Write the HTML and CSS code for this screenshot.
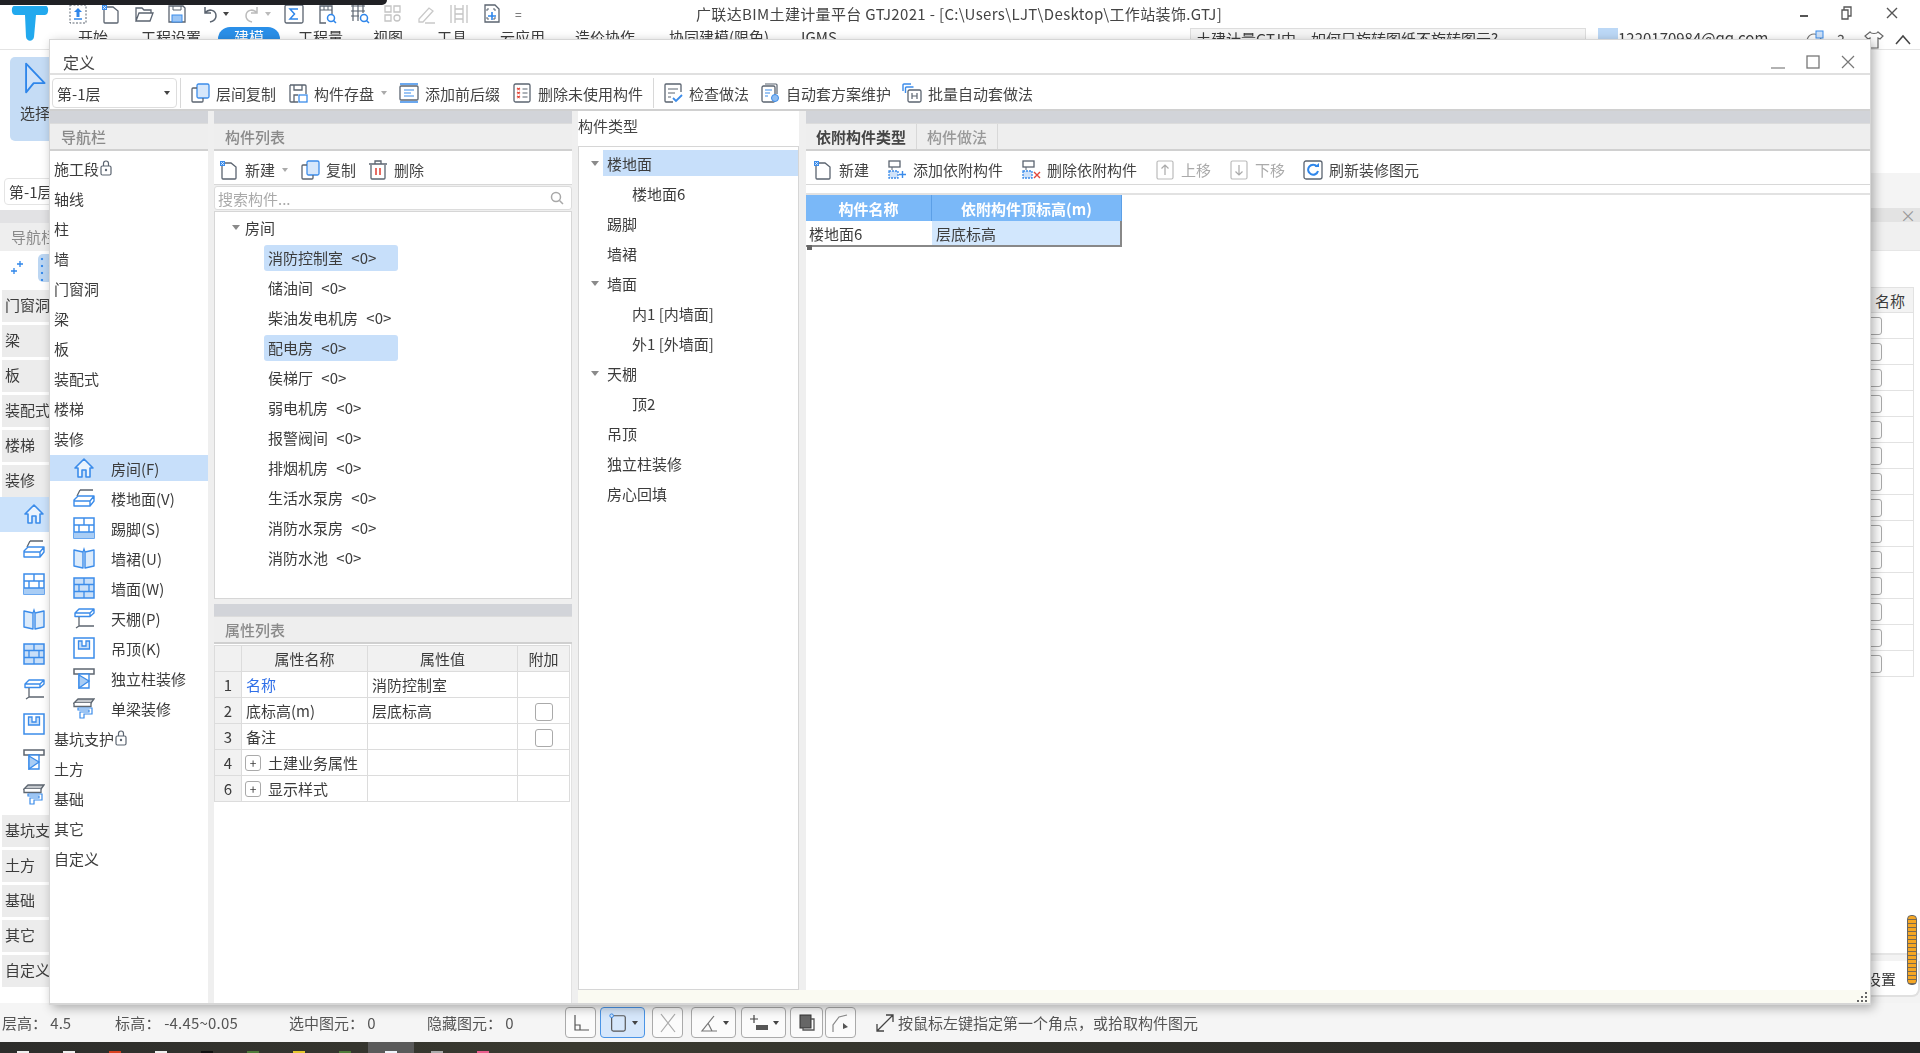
FILE: index.html
```html
<!DOCTYPE html>
<html lang="zh-CN">
<head>
  <meta charset="UTF-8">
  <title>广联达BIM土建计量平台 GTJ2021</title>
  <meta name="viewport" content="width=device-width, initial-scale=1">
  <link rel="stylesheet" href="styles.css">
</head>
<body>
<svg class="defs" aria-hidden="true">
  <defs>
    <symbol id="i-home" viewBox="0 0 22 22"><path d="M11 2 2 11h3v9h4v-7h4v7h4v-9h3z" fill="#eaf3fd" stroke="#3b8cea" stroke-width="1.6" stroke-linejoin="round"/></symbol>
    <symbol id="i-floor" viewBox="0 0 22 22"><path d="M7 3h13M7 3 4 9" fill="none" stroke="#5d6670" stroke-width="1.3"/><path d="M1 13l4-4h16v5l-4 5H1zM1 14h16l4-5M17 14v5" fill="#fff" stroke="#3b8cea" stroke-width="1.4" stroke-linejoin="round"/></symbol>
    <symbol id="i-skirt" viewBox="0 0 22 22"><rect x="1" y="1" width="20" height="20" fill="#fff" stroke="#3b8cea" stroke-width="1.5"/><path d="M1 15h20v6H1z" fill="#a9cdf5"/><path d="M1 8h20M1 15h20M11 1v7M6 8v7M16 8v7" fill="none" stroke="#3b8cea" stroke-width="1.4"/></symbol>
    <symbol id="i-dado" viewBox="0 0 22 22"><path d="M1 3l9 2v16l-9-2zM21 3l-9 2v16l9-2z" fill="#dcebfb" stroke="#3b8cea" stroke-width="1.4" stroke-linejoin="round"/><path d="M10 5l1-3 1 3" fill="none" stroke="#3b8cea" stroke-width="1.2"/></symbol>
    <symbol id="i-wall" viewBox="0 0 22 22"><rect x="1" y="1" width="20" height="20" fill="#c9dff8" stroke="#3b8cea" stroke-width="1.5"/><path d="M1 7.5h20M1 14.5h20M11 1v6.500M6 7.500v7M16 7.500v7M11 14.500V21" fill="none" stroke="#3b8cea" stroke-width="1.3"/></symbol>
    <symbol id="i-ceil" viewBox="0 0 22 22"><path d="M2 6l4-4h15v4l-4 3.500H2zM2 6h15l4-4M17 6v3.500" fill="#fff" stroke="#3b8cea" stroke-width="1.4" stroke-linejoin="round"/><path d="M6 10v9h15M6 19l-3 2" fill="none" stroke="#5d6670" stroke-width="1.3"/></symbol>
    <symbol id="i-hang" viewBox="0 0 22 22"><rect x="1" y="1" width="20" height="20" fill="#fff" stroke="#3b8cea" stroke-width="1.5"/><path d="M5.500 4v8h11V4h-3.500v5H9V4z" fill="#c9dff8" stroke="#3b8cea" stroke-width="1.3"/></symbol>
    <symbol id="i-col" viewBox="0 0 22 22"><rect x="1" y="2" width="20" height="5" fill="#fff" stroke="#5d6670" stroke-width="1.5"/><path d="M6 7v14h10V7z" fill="#fff" stroke="#3b8cea" stroke-width="1.400"/><path d="M6 8l10 6-10 7z" fill="#a9cdf5" stroke="#3b8cea" stroke-width="1.300"/></symbol>
    <symbol id="i-beam" viewBox="0 0 22 22"><path d="M1 6l4-4h16l-3 4z" fill="#c4c8cd" stroke="#5d6670" stroke-width="1.300"/><path d="M1 6v3.500h17V6" fill="#fff" stroke="#5d6670" stroke-width="1.300"/><path d="M5 11h14v6h-8v4H7v-6h9v-2H5z" fill="#fff" stroke="#3b8cea" stroke-width="1.200"/></symbol>
    <symbol id="i-new" viewBox="0 0 20 20"><path d="M3 3h9l5 4v11a1 1 0 0 1-1 1H4a1 1 0 0 1-1-1z" fill="#fff" stroke="#5b6470" stroke-width="1.300"/><rect x="1" y="1" width="5" height="5" fill="#3b8cea"/><path d="M2 2l3 3M5 2 2 5" stroke="#fff" stroke-width=".7"/></symbol>
    <symbol id="i-copy" viewBox="0 0 20 20"><rect x="7" y="1" width="12" height="14" rx="1.500" fill="#d6e7fb" stroke="#3b8cea" stroke-width="1.300"/><path d="M7 5H3a1 1 0 0 0-1 1v12a1 1 0 0 0 1 1h9a1 1 0 0 0 1-1v-3" fill="none" stroke="#5b6470" stroke-width="1.300"/></symbol>
    <symbol id="i-save" viewBox="0 0 20 20"><path d="M2 2h15a1 1 0 0 1 1 1v8M10 19H3a1 1 0 0 1-1-1V2M6 2v5h8V2M6 19v-7h4" fill="none" stroke="#5b6470" stroke-width="1.300"/><rect x="11" y="12" width="8" height="7" fill="#fff" stroke="#3b8cea" stroke-width="1.300"/></symbol>
    <symbol id="i-prefix" viewBox="0 0 20 20"><rect x="1" y="3" width="18" height="14" rx="1" fill="#fff" stroke="#5b6470" stroke-width="1.300"/><path d="M1 1h18M1 19h18" stroke="#3b8cea" stroke-width="1.600"/><path d="M5 7h10M5 10h7M5 13h10" stroke="#3b8cea" stroke-width="1.100"/></symbol>
    <symbol id="i-unused" viewBox="0 0 20 20"><rect x="2" y="1" width="16" height="18" rx="1.500" fill="#fff" stroke="#5b6470" stroke-width="1.300"/><path d="M5 5l3 2M8 5 5 7M5 9l3 2M8 9l-3 2M5 13l3 2M8 13l-3 2" stroke="#e2483c" stroke-width="1.200"/><path d="M10.500 6h5M10.500 10h5M10.500 14h5" stroke="#5b6470" stroke-width="1.200"/></symbol>
    <symbol id="i-check" viewBox="0 0 20 20"><path d="M18 9V2a1 1 0 0 0-1-1H3a1 1 0 0 0-1 1v16a1 1 0 0 0 1 1h7" fill="none" stroke="#5b6470" stroke-width="1.300"/><path d="M5 6h10M5 10h7M5 14h3" stroke="#5b6470" stroke-width="1.100"/><path d="M10 15l3 3 6-6" fill="none" stroke="#3b8cea" stroke-width="1.800"/></symbol>
    <symbol id="i-auto" viewBox="0 0 20 20"><path d="M5 1h11a1 1 0 0 1 1 1v9" fill="none" stroke="#5b6470" stroke-width="1.200"/><rect x="2" y="3" width="13" height="16" rx="1.500" fill="#fff" stroke="#5b6470" stroke-width="1.300"/><path d="M5 7h7M5 10h5M5 13h3" stroke="#3b8cea" stroke-width="1.200"/><circle cx="15" cy="15" r="3.500" fill="#8fbdf2" stroke="#3b8cea"/></symbol>
    <symbol id="i-batch" viewBox="0 0 20 20"><path d="M1 8V2a1 1 0 0 1 1-1h7M3.500 10V5a1 1 0 0 1 1-1h7" fill="none" stroke="#3b8cea" stroke-width="1.400"/><rect x="6" y="7" width="13" height="12" rx="1.500" fill="#fff" stroke="#5b6470" stroke-width="1.300"/><path d="M10 10v6M15 10v6M10 13h5" stroke="#5b6470" stroke-width="1.200"/></symbol>
    <symbol id="i-del" viewBox="0 0 20 20"><path d="M3 5v13a1 1 0 0 0 1 1h12a1 1 0 0 0 1-1V5M1 4h18M7 4V1h6v3" fill="none" stroke="#5b6470" stroke-width="1.300"/><path d="M8 8v7M12 8v7" stroke="#e2483c" stroke-width="1.600"/></symbol>
    <symbol id="i-add" viewBox="0 0 20 20"><rect x="2" y="1" width="11" height="6" fill="#fff" stroke="#5b6470" stroke-width="1.300"/><path d="M5 7v3" stroke="#5b6470"/><rect x="2" y="11" width="9" height="7" fill="#cfe2f9" stroke="#3b8cea" stroke-width="1.300" stroke-dasharray="2 1"/><path d="M15.500 11v7M12 14.500h7" stroke="#3b8cea" stroke-width="1.400"/></symbol>
    <symbol id="i-rem" viewBox="0 0 20 20"><rect x="2" y="1" width="11" height="6" fill="#fff" stroke="#5b6470" stroke-width="1.300"/><path d="M5 7v3" stroke="#5b6470"/><rect x="2" y="11" width="9" height="7" fill="#cfe2f9" stroke="#3b8cea" stroke-width="1.300" stroke-dasharray="2 1"/><path d="M13 12l6 6M19 12l-6 6" stroke="#e2483c" stroke-width="1.400"/></symbol>
    <symbol id="i-up" viewBox="0 0 20 20"><rect x="2" y="1" width="16" height="18" rx="1.500" fill="#fff" stroke="#bbb" stroke-width="1.200"/><path d="M10 15V5M6.500 8.500 10 5l3.500 3.500" fill="none" stroke="#aaa" stroke-width="1.200"/></symbol>
    <symbol id="i-down" viewBox="0 0 20 20"><rect x="2" y="1" width="16" height="18" rx="1.500" fill="#fff" stroke="#bbb" stroke-width="1.200"/><path d="M10 5v10M6.500 11.500 10 15l3.500-3.500" fill="none" stroke="#aaa" stroke-width="1.200"/></symbol>
    <symbol id="i-refresh" viewBox="0 0 20 20"><rect x="1" y="1" width="18" height="18" rx="2" fill="#fff" stroke="#5b6470" stroke-width="1.300"/><path d="M14 6.500A5 5 0 1 0 15 11" fill="none" stroke="#2f86ea" stroke-width="2"/><path d="M11.500 7h4.500V3z" fill="#2f86ea"/></symbol>
    <symbol id="i-lock" viewBox="0 0 12 16"><rect x="1" y="6" width="10" height="9" rx="1.500" fill="none" stroke="#5b6470" stroke-width="1.200"/><path d="M3.500 6V3.500a2.500 2.500 0 0 1 5 0V6" fill="none" stroke="#5b6470" stroke-width="1.200"/><circle cx="6" cy="10" r="1.200" fill="#5b6470"/></symbol>
    <symbol id="i-search" viewBox="0 0 14 14"><circle cx="6" cy="6" r="4.500" fill="none" stroke="#a8a8a8" stroke-width="1.500"/><path d="M9.500 9.500 13 13" stroke="#a8a8a8" stroke-width="1.500"/></symbol>
  </defs>
</svg>

<div class="app">
  <div class="capture-bar"></div>

  <header class="app-head">
    <div class="qat">
      <svg class="logo" viewBox="0 0 38 36"><path d="M3 1h32c3 0 3 9-1 9H25l-2 22c-1 5-7 5-8 0l-1-22H4C0 10 0 1 3 1z" fill="#22a9ee"/></svg>
      <div class="qat-icons">
        <svg class="qi qi-1" viewBox="0 0 20 20"><rect x="2" y="1" width="16" height="18" fill="none" stroke="#5b6470" stroke-dasharray="2 1.500"/><path d="M10 4l4 4h-2.500v5h-3V8H6z" fill="#2f86ea"/><path d="M6 15h8" stroke="#2f86ea" stroke-width="1.500"/></svg>
        <svg class="qi"><use href="#i-new"/></svg>
        <svg class="qi" viewBox="0 0 20 20"><path d="M2 17V4h6l2 2h7v3M2 17l3-8h14l-3 8z" fill="none" stroke="#5b6470" stroke-width="1.300"/></svg>
        <svg class="qi" viewBox="0 0 20 20"><path d="M2 2h14l2 2v14H2z" fill="#fff" stroke="#5b6470" stroke-width="1.300"/><rect x="5" y="11" width="10" height="7" fill="#9cc6f5" stroke="#3b8cea"/><path d="M6 2v4h8V2" fill="none" stroke="#5b6470"/></svg>
        <span class="undo"><svg class="qi" viewBox="0 0 20 20"><path d="M5 3v6h6M5 9c4-5 11-3 11 3 0 3-2 5-6 6" fill="none" stroke="#5b6470" stroke-width="1.500"/></svg><i class="dd"></i></span>
        <span class="undo off"><svg class="qi" viewBox="0 0 20 20"><path d="M15 3v6H9M15 9c-4-5-11-3-11 3 0 3 2 5 6 6" fill="none" stroke="#bbb" stroke-width="1.500"/></svg><i class="dd"></i></span>
        <svg class="qi" viewBox="0 0 20 20"><rect x="1" y="1" width="18" height="18" rx="1.500" fill="#fff" stroke="#5b6470" stroke-width="1.300"/><path d="M14 5H6l4.500 5L6 15h8" fill="none" stroke="#2f86ea" stroke-width="1.500"/></svg>
        <svg class="qi" viewBox="0 0 20 20"><path d="M3 12V2h12v8M3 12v7h6" fill="none" stroke="#5b6470" stroke-width="1.300"/><path d="M3 6h12M7 2v4M11 2v4" stroke="#5b6470"/><circle cx="14" cy="14" r="3.500" fill="#fff" stroke="#2f86ea" stroke-width="1.500"/><path d="M16.500 16.500 19 19" stroke="#2f86ea" stroke-width="1.500"/></svg>
        <svg class="qi" viewBox="0 0 20 20"><path d="M1 2h14M1 7h14M1 12h8M3 1v16M8 1v16M13 1v8" stroke="#5b6470" fill="none" stroke-width="1.200"/><circle cx="14" cy="14" r="3.500" fill="#fff" stroke="#2f86ea" stroke-width="1.500"/><path d="M16.500 16.500 19 19" stroke="#2f86ea" stroke-width="1.500"/></svg>
        <svg class="qi" viewBox="0 0 20 20"><path d="M2 2h6v6H2zM11 2h6v6h-6zM2 11h6v6H2z" fill="none" stroke="#c4c4c4" stroke-width="1.300"/><circle cx="14" cy="14" r="3" fill="none" stroke="#c4c4c4" stroke-width="1.300"/></svg>
        <svg class="qi" viewBox="0 0 20 20"><path d="M3 15 13 4l4 3L7 18H3zM9 19h10" fill="none" stroke="#c9c9c9" stroke-width="1.300"/></svg>
        <svg class="qi" viewBox="0 0 20 20"><path d="M2 1v18M18 1v18M6 1v18M14 1v18M6 5h8M6 10h8M6 15h8" fill="none" stroke="#c4c4c4" stroke-width="1.300"/></svg>
        <svg class="qi" viewBox="0 0 20 20"><path d="M3 18V1h10l4 4v13z" fill="none" stroke="#5b6470" stroke-width="1.300"/><path d="M7 5H5v2M13 7v-2h-2M7 15H5v-2M13 13v2h-2" fill="none" stroke="#5b6470"/><path d="M10 8v8M6 12h8" stroke="#2f86ea" stroke-width="1.600"/></svg>
        <span class="more">=</span>
      </div>
    </div>
    <div class="app-title">广联达BIM土建计量平台 GTJ2021 - [C:\Users\LJT\Desktop\工作站装饰.GTJ]</div>
    <div class="win-ctrl">
      <span class="wc-min"></span>
      <svg class="wc-rest" viewBox="0 0 12 14"><path d="M3 4V1h7v9H7M1 4h6v9H1z" fill="none" stroke="#555" stroke-width="1.300"/></svg>
      <svg class="wc-close" viewBox="0 0 12 12"><path d="M1 1l10 10M11 1 1 11" stroke="#555" stroke-width="1.400"/></svg>
    </div>
  </header>

  <div class="ribbon-tabs">
    <span class="rt rt-a">开始</span>
    <span class="rt rt-b">工程设置</span>
    <span class="rt rt-on">建模</span>
    <span class="rt rt-c">工程量</span>
    <span class="rt rt-d">视图</span>
    <span class="rt rt-e">工具</span>
    <span class="rt rt-f">云应用</span>
    <span class="rt rt-g">造价协作</span>
    <span class="rt rt-h">协同建模(限免)</span>
    <span class="rt rt-i">IGMS</span>
    <div class="ribbon-search">土建计量GTJ中，如何只旋转图纸不旋转图元?</div>
    <div class="account"><span class="avatar"></span>1220170984@qq.com</div>
    <div class="ribbon-right">
      <svg viewBox="0 0 20 20"><path d="M3 17c-3-6 0-13 6-13 3 0 5 1 7 5s0 9-7 8z" fill="none" stroke="#777" stroke-width="1.200"/><rect x="11" y="1" width="7" height="7" fill="#cfe2f9" stroke="#3b8cea"/></svg>
      <span class="help">?</span>
      <svg class="shirt" viewBox="0 0 20 20"><path d="M6 2 1 6l3 3 2-1v10h8V8l2 1 3-3-5-4c-1 2-7 2-8 0z" fill="none" stroke="#666" stroke-width="1.200"/></svg>
      <svg class="chev" viewBox="0 0 20 20"><path d="M3 14l7-8 7 8" fill="none" stroke="#444" stroke-width="1.500"/></svg>
    </div>
  </div>

  <div class="ribbon">
    <div class="select-btn">
      <svg viewBox="0 0 26 38"><path d="M3 2v34l9-11h13z" fill="#cfe2f9" stroke="#2f86ea" stroke-width="2.200" stroke-linejoin="round"/></svg>
      <span>选择</span>
    </div>
  </div>

  <div class="work">
    <aside class="bg-left">
      <div class="bg-floor">第-1层</div>
      <div class="bg-band"></div>
      <div class="bg-head">导航栏</div>
      <div class="bg-tools">
        <svg viewBox="0 0 14 14"><path d="M10 0v6M7 3h6M4 7v6M1 10h6" stroke="#2f86ea" stroke-width="1.300"/></svg>
        <span class="bg-pill"></span>
      </div>
      <div class="bg-nav">门窗洞</div>
      <div class="bg-nav">梁</div>
      <div class="bg-nav">板</div>
      <div class="bg-nav">装配式</div>
      <div class="bg-nav">楼梯</div>
      <div class="bg-nav">装修</div>
      <div class="bg-ico on"><svg><use href="#i-home"/></svg></div>
      <div class="bg-ico"><svg><use href="#i-floor"/></svg></div>
      <div class="bg-ico"><svg><use href="#i-skirt"/></svg></div>
      <div class="bg-ico"><svg><use href="#i-dado"/></svg></div>
      <div class="bg-ico"><svg><use href="#i-wall"/></svg></div>
      <div class="bg-ico"><svg><use href="#i-ceil"/></svg></div>
      <div class="bg-ico"><svg><use href="#i-hang"/></svg></div>
      <div class="bg-ico"><svg><use href="#i-col"/></svg></div>
      <div class="bg-ico"><svg><use href="#i-beam"/></svg></div>
      <div class="bg-nav">基坑支</div>
      <div class="bg-nav">土方</div>
      <div class="bg-nav">基础</div>
      <div class="bg-nav">其它</div>
      <div class="bg-nav">自定义</div>
    </aside>
    <div class="bg-middle"></div>
    <aside class="bg-right">
      <div class="br-top"></div>
      <div class="br-band"><span>×</span></div>
      <div class="br-head"></div>
      <div class="br-tools"></div>
      <div class="br-table">
        <div class="br-row br-th">名称</div>
        <div class="br-row"><i></i></div><div class="br-row"><i></i></div><div class="br-row"><i></i></div>
        <div class="br-row"><i></i></div><div class="br-row"><i></i></div><div class="br-row"><i></i></div>
        <div class="br-row"><i></i></div><div class="br-row"><i></i></div><div class="br-row"><i></i></div>
        <div class="br-row"><i></i></div><div class="br-row"><i></i></div><div class="br-row"><i></i></div>
        <div class="br-row"><i></i></div><div class="br-row"><i></i></div>
      </div>
      <div class="br-fill"></div>
      <div class="br-foot">设置</div>
      <div class="br-meter"></div>
    </aside>
  </div>

  <footer class="status">
    <div class="st-info">
      <span class="st-a">层高：&nbsp;4.5</span>
      <span class="st-b">标高：&nbsp;-4.45~0.05</span>
      <span class="st-c">选中图元：&nbsp;0</span>
      <span class="st-d">隐藏图元：&nbsp;0</span>
    </div>
    <div class="st-btns">
      <span class="sb w31"><svg viewBox="0 0 20 20"><path d="M4 2v15h14M4 12h5v5" fill="none" stroke="#555" stroke-width="1.200"/></svg></span>
      <span class="sb w45 on"><svg viewBox="0 0 20 22"><rect x="3" y="3" width="15" height="17" rx="2" fill="none" stroke="#555" stroke-width="1.300"/><circle cx="3" cy="3" r="2" fill="#cfe2f9" stroke="#2f86ea"/></svg><i class="dd"></i></span>
      <span class="sb w31"><svg viewBox="0 0 20 20"><path d="M3 1l14 18M17 1 3 19" stroke="#aaa" stroke-width="1.200"/></svg></span>
      <span class="sb w45"><svg viewBox="0 0 20 20"><path d="M15 3 3 18h15M9 10l4 8" fill="none" stroke="#777" stroke-width="1.200"/></svg><i class="dd"></i></span>
      <span class="sb w45"><svg viewBox="0 0 20 20"><path d="M5 2v8M1 6h8" stroke="#444" stroke-width="1.200"/><rect x="7" y="12" width="12" height="5" fill="#555"/></svg><i class="dd"></i></span>
      <span class="sb w33"><svg viewBox="0 0 20 20"><rect x="3" y="2" width="11" height="13" fill="#666" stroke="#333"/><path d="M14 6h3v11H6v-2" fill="none" stroke="#555" stroke-width="1.300"/></svg></span>
      <span class="sb w31"><svg viewBox="0 0 20 20"><path d="M2 19v-7l6-8 8-2" fill="none" stroke="#888" stroke-width="1.200"/><path d="M12 10l5 4-5 2z" fill="#555"/></svg></span>
    </div>
    <svg class="st-arrow" viewBox="0 0 20 20"><path d="M2 18 18 2M11 2h7v7M2 11v7h7" fill="none" stroke="#444" stroke-width="1.300"/></svg>
    <span class="st-hint">按鼠标左键指定第一个角点，或拾取构件图元</span>
  </footer>

  <div class="taskbar">
    <i class="t-w"></i><i class="t-w"></i><i class="t-r"></i><i class="t-w"></i><i class="t-k"></i><i class="t-g"></i><i class="t-y"></i><i class="t-g"></i><i class="t-w on"></i><i class="t-s"></i><i class="t-p"></i>
  </div>
</div>

<section class="dlg">
  <div class="dlg-title">
    <span>定义</span>
    <div class="dlg-ctrl">
      <svg viewBox="0 0 14 14"><path d="M0 13h14" stroke="#888" stroke-width="1.300"/></svg>
      <svg viewBox="0 0 14 14"><rect x="1" y="1" width="12" height="12" fill="none" stroke="#777" stroke-width="1.300"/></svg>
      <svg viewBox="0 0 14 14"><path d="M1 1l12 12M13 1 1 13" stroke="#777" stroke-width="1.200"/></svg>
    </div>
  </div>

  <div class="dlg-bar">
    <div class="floor-select">第-1层<i class="dd"></i></div>
    <span class="sep"></span>
    <span class="tb"><svg><use href="#i-copy"/></svg>层间复制</span>
    <span class="tb"><svg><use href="#i-save"/></svg>构件存盘<i class="dd lt"></i></span>
    <span class="tb"><svg><use href="#i-prefix"/></svg>添加前后缀</span>
    <span class="tb tb-last"><svg><use href="#i-unused"/></svg>删除未使用构件</span>
    <span class="sep"></span>
    <span class="tb tb-g2"><svg><use href="#i-check"/></svg>检查做法</span>
    <span class="tb tb-g2"><svg><use href="#i-auto"/></svg>自动套方案维护</span>
    <span class="tb tb-g2"><svg><use href="#i-batch"/></svg>批量自动套做法</span>
  </div>

  <div class="dlg-body">
    <div class="col-nav">
      <div class="band"></div>
      <div class="phead">导航栏</div>
      <div class="nav-list">
        <div class="row">施工段<svg class="lock"><use href="#i-lock"/></svg></div>
        <div class="row">轴线</div>
        <div class="row">柱</div>
        <div class="row">墙</div>
        <div class="row">门窗洞</div>
        <div class="row">梁</div>
        <div class="row">板</div>
        <div class="row">装配式</div>
        <div class="row">楼梯</div>
        <div class="row">装修</div>
        <div class="row sub on"><svg><use href="#i-home"/></svg>房间(F)</div>
        <div class="row sub"><svg><use href="#i-floor"/></svg>楼地面(V)</div>
        <div class="row sub"><svg><use href="#i-skirt"/></svg>踢脚(S)</div>
        <div class="row sub"><svg><use href="#i-dado"/></svg>墙裙(U)</div>
        <div class="row sub"><svg><use href="#i-wall"/></svg>墙面(W)</div>
        <div class="row sub"><svg><use href="#i-ceil"/></svg>天棚(P)</div>
        <div class="row sub"><svg><use href="#i-hang"/></svg>吊顶(K)</div>
        <div class="row sub"><svg><use href="#i-col"/></svg>独立柱装修</div>
        <div class="row sub"><svg><use href="#i-beam"/></svg>单梁装修</div>
        <div class="row">基坑支护<svg class="lock"><use href="#i-lock"/></svg></div>
        <div class="row">土方</div>
        <div class="row">基础</div>
        <div class="row">其它</div>
        <div class="row">自定义</div>
      </div>
    </div>

    <div class="col-comp">
      <div class="band"></div>
      <div class="phead">构件列表</div>
      <div class="ptools">
        <span class="tb"><svg><use href="#i-new"/></svg>新建<i class="dd lt"></i></span>
        <span class="tb"><svg><use href="#i-copy"/></svg>复制</span>
        <span class="tb"><svg><use href="#i-del"/></svg>删除</span>
      </div>
      <div class="search">搜索构件...<svg><use href="#i-search"/></svg></div>
      <div class="comp-list">
        <div class="tree-head"><i class="arrow"></i>房间</div>
        <div class="item"><span class="on">消防控制室 &lt;0&gt;</span></div>
        <div class="item"><span>储油间 &lt;0&gt;</span></div>
        <div class="item"><span>柴油发电机房 &lt;0&gt;</span></div>
        <div class="item"><span class="on">配电房 &lt;0&gt;</span></div>
        <div class="item"><span>侯梯厅 &lt;0&gt;</span></div>
        <div class="item"><span>弱电机房 &lt;0&gt;</span></div>
        <div class="item"><span>报警阀间 &lt;0&gt;</span></div>
        <div class="item"><span>排烟机房 &lt;0&gt;</span></div>
        <div class="item"><span>生活水泵房 &lt;0&gt;</span></div>
        <div class="item"><span>消防水泵房 &lt;0&gt;</span></div>
        <div class="item"><span>消防水池 &lt;0&gt;</span></div>
      </div>
      <div class="split"></div>
      <div class="band"></div>
      <div class="phead">属性列表</div>
      <div class="prop-wrap">
        <table class="prop">
          <tr class="th"><th></th><th>属性名称</th><th>属性值</th><th>附加</th></tr>
          <tr><th>1</th><td class="link">名称</td><td>消防控制室</td><td></td></tr>
          <tr><th>2</th><td>底标高(m)</td><td>层底标高</td><td class="c"><i class="cb"></i></td></tr>
          <tr><th>3</th><td>备注</td><td></td><td class="c"><i class="cb"></i></td></tr>
          <tr><th>4</th><td><i class="plus">+</i>土建业务属性</td><td></td><td></td></tr>
          <tr><th>6</th><td><i class="plus">+</i>显示样式</td><td></td><td></td></tr>
        </table>
      </div>
    </div>

    <div class="col-main">
      <div class="main-top">
        <div class="col-type">
          <div class="type-head">构件类型</div>
          <div class="type-tree">
            <div class="t1 on"><i class="arrow"></i><span>楼地面</span></div>
            <div class="t2">楼地面6</div>
            <div class="t1">踢脚</div>
            <div class="t1">墙裙</div>
            <div class="t1 open"><i class="arrow"></i><span>墙面</span></div>
            <div class="t2">内1 [内墙面]</div>
            <div class="t2">外1 [外墙面]</div>
            <div class="t1 open"><i class="arrow"></i><span>天棚</span></div>
            <div class="t2">顶2</div>
            <div class="t1">吊顶</div>
            <div class="t1">独立柱装修</div>
            <div class="t1">房心回填</div>
          </div>
        </div>
        <div class="col-dep">
          <div class="band"></div>
          <div class="tabs"><span class="tab on">依附构件类型</span><span class="tab">构件做法</span></div>
          <div class="ptools dep-tools">
            <span class="tb"><svg><use href="#i-new"/></svg>新建</span>
            <span class="tb"><svg><use href="#i-add"/></svg>添加依附构件</span>
            <span class="tb"><svg><use href="#i-rem"/></svg>删除依附构件</span>
            <span class="tb off"><svg><use href="#i-up"/></svg>上移</span>
            <span class="tb off"><svg><use href="#i-down"/></svg>下移</span>
            <span class="tb"><svg><use href="#i-refresh"/></svg>刷新装修图元</span>
          </div>
          <div class="dep-gap"></div>
          <div class="dep-area">
            <div class="grid">
              <div class="gh g1">构件名称</div><div class="gh g2">依附构件顶标高(m)</div>
              <div class="gc g1">楼地面6</div><div class="gc g2 sel">层底标高</div>
              <i class="grip"></i>
            </div>
          </div>
        </div>
      </div>
      <div class="dlg-foot">
        <svg viewBox="0 0 10 10"><path d="M8 0h2v2H8zM4 4h2v2H4zM8 4h2v2H8zM0 8h2v2H0zM4 8h2v2H4zM8 8h2v2H8z" fill="#666"/></svg>
      </div>
    </div>
  </div>
</section>
</body>
</html>
```

FILE: styles.css
```css
* { box-sizing: border-box; }
html, body { margin: 0; padding: 0; height: 1053px; overflow: hidden; }
body { position: relative; width: 1920px; background: #fff; color: #3c3c3c; font-family: "Noto Sans CJK SC", "Liberation Sans", sans-serif; font-size: 15px; filter: blur(.4px); }
.defs { position: absolute; width: 0; height: 0; }
i { font-style: normal; }

.app { display: flex; flex-direction: column; height: 1053px; }
.capture-bar { position: absolute; left: 0; top: 0; width: 387px; height: 5px; background: #202125; border-bottom-right-radius: 6px; }

/* main window behind the dialog */
.app-head { display: flex; height: 27px; flex: none; }
.qat { display: flex; width: 690px; }
.logo { position: absolute; left: 11px; top: 5px; width: 38px; height: 36px; }
.qat-icons { display: flex; align-items: center; height: 27px; margin-left: 68px; gap: 13px; }
.qi { width: 20px; height: 20px; }
.undo { display: flex; align-items: center; gap: 3px; }
.undo.off .dd { border-top-color: #bbb; }
.more { color: #555; font-size: 12px; }
.app-title { width: 1090px; padding-left: 6px; line-height: 27px; font-size: 15px; letter-spacing: .35px; color: #444; white-space: nowrap; }
.win-ctrl { position: absolute; left: 1800px; top: 6px; display: flex; align-items: center; gap: 33px; }
.wc-min { width: 8px; height: 2px; background: #555; margin-top: 5px; }
.wc-rest { width: 12px; height: 14px; }
.wc-close { width: 12px; height: 12px; }

.ribbon-tabs { position: relative; height: 23px; flex: none; border-bottom: 1px solid #e4e4e4; }
.rt { position: absolute; top: 0; line-height: 20px; white-space: nowrap; }
.rt-a { left: 78px; } .rt-b { left: 141px; } .rt-c { left: 298px; } .rt-d { left: 373px; }
.rt-e { left: 437px; } .rt-f { left: 500px; } .rt-g { left: 575px; } .rt-h { left: 669px; } .rt-i { left: 801px; }
.rt-on { left: 218px; width: 62px; height: 23px; text-align: center; color: #fff; background: #2a8fe8; border-radius: 12px 12px 0 0; }
.ribbon-search { position: absolute; left: 1190px; top: 1px; width: 396px; height: 22px; padding-left: 5px; line-height: 20px; background: #f4f4f4; border: 1px solid #ddd; white-space: nowrap; }
.account { position: absolute; left: 1598px; top: 1px; display: flex; line-height: 20px; }
.avatar { width: 20px; height: 20px; background: #bcd8f6; }
.ribbon-right { position: absolute; left: 1805px; top: 1px; display: flex; align-items: center; }
.ribbon-right svg { width: 20px; height: 20px; flex: none; }
.help { width: 14px; margin-left: 12px; color: #555; font-size: 16px; }
.ribbon-right .shirt { margin-left: 13px; }
.ribbon-right .chev { margin-left: 9px; }

.ribbon { height: 123px; flex: none; padding: 7px 0 0 10px; }
.select-btn { display: flex; flex-direction: column; align-items: flex-start; width: 60px; height: 84px; padding: 5px 0 0 12px; background: #c5dcf5; border-radius: 5px; }
.select-btn svg { width: 25px; height: 32px; }
.select-btn span { margin: 8px 0 0 -2px; white-space: nowrap; }

.work { display: flex; flex: 1; min-height: 0; }
.bg-left { width: 55px; flex: none; overflow: hidden; }
.bg-floor { height: 27px; margin: 5px 0 5px 4px; padding-left: 4px; line-height: 26px; background: #fff; border: 1px solid #e4e4e4; border-radius: 4px; white-space: nowrap; }
.bg-band { height: 13px; background: #e2e2e4; }
.bg-head { height: 28px; padding-left: 11px; line-height: 28px; color: #8a8a8a; background: #eee; white-space: nowrap; }
.bg-tools { display: flex; align-items: center; gap: 14px; height: 33px; padding-left: 10px; }
.bg-tools svg { width: 14px; height: 14px; flex: none; }
.bg-pill { width: 20px; height: 28px; flex: none; background: radial-gradient(circle at 4px 3px, #3b8cea 1.200px, transparent 1.600px) 0 2px / 8px 7px, #bcd6f2; border-radius: 5px; }
.bg-nav { height: 32px; margin: 3px 0 0 2px; padding-left: 3px; line-height: 30px; background: #ececec; white-space: nowrap; }
.bg-nav:nth-of-type(5) { margin-top: 6px; }
.bg-ico { height: 35px; padding: 6px 0 0 23px; }
.bg-ico svg { width: 22px; height: 22px; }
.bg-ico.on { background: #cbe2fb; }
.bg-ico + .bg-nav { margin-top: 3px; }
.bg-middle { flex: 1; background: #f5f5f5; }
.bg-right { position: relative; width: 60px; flex: none; overflow: hidden; background: #f3f3f3; }
.br-top { height: 35px; background: #f4f4f4; }
.br-band { display: flex; justify-content: flex-end; align-items: center; height: 14px; padding-right: 4px; background: #e3e3e3; color: #999; font-size: 16px; }
.br-head { height: 28px; background: #f0f0f0; }
.br-tools { height: 33px; background: #fff; border-top: 1px solid #e6e6e6; }
.br-table { padding: 4px 6px 0 0; background: #fff; }
.br-row { display: flex; align-items: center; justify-content: flex-end; height: 26px; border: 1px solid #e2e2e2; border-top: 0; overflow: hidden; }
.br-th { padding-right: 8px; background: #f3f3f3; border-top: 1px solid #e2e2e2; white-space: nowrap; }
.br-row i { width: 18px; height: 18px; margin-right: 31px; border: 1.500px solid #aaa; border-radius: 3px; background: #fff; }
.br-fill { height: 278px; background: #fff; border-bottom: 2px solid #e6e6e6; }
.br-foot { height: 36px; margin-top: 6px; padding: 7px 22px 0 0; text-align: right; background: #fff; border-bottom: 2px solid #e0e0e0; border-right: 2px solid #e0e0e0; border-radius: 0 0 8px 0; }
.br-meter { position: absolute; right: 3px; bottom: 18px; width: 10px; height: 70px; border-radius: 4px; background: repeating-linear-gradient(#f5a623 0 3px, #7a6a50 3px 4px); border: 1px solid #666; }

.status { display: flex; align-items: center; height: 39px; flex: none; background: #f5f5f5; color: #555; }
.st-info { display: flex; width: 565px; padding-left: 2px; white-space: nowrap; }
.st-a { width: 113px; } .st-b { width: 174px; letter-spacing: .2px; } .st-c { width: 138px; }
.st-btns { display: flex; gap: 4px; }
.sb { display: flex; align-items: center; justify-content: center; gap: 4px; height: 31px; background: #fbfbfb; border: 1px solid #aaa; border-radius: 4px; }
.sb svg { width: 20px; height: 20px; }
.w31 { width: 31px; } .w33 { width: 33px; } .w45 { width: 45px; }
.sb:nth-child(3) { margin-left: 3px; }
.sb:nth-child(4) { margin-left: 4px; }
.sb:nth-child(5) { margin-left: 1px; }
.sb:nth-child(7) { margin-left: -2px; }
.sb.on { background: #d6e7fb; border-color: #4a94e6; }
.st-arrow { width: 20px; height: 20px; margin-left: 19px; }
.st-hint { margin-left: 3px; white-space: nowrap; }

.taskbar { display: flex; align-items: flex-end; height: 11px; flex: none; background: linear-gradient(90deg, #2d2d2b, #3a3a30 30%, #262626); }
.taskbar i { display: flex; width: 46px; height: 11px; padding: 9px 17px 0; background-clip: content-box; }
.t-w { background-color: #eee; } .t-r { background-color: #d8401f; } .t-k { background-color: #111; } .t-g { background-color: #4e7a3a; }
.t-y { background-color: #e4c62c; } .t-s { background-color: #aaa; } .t-p { background-color: #ea5c8c; }
.taskbar i.on { background: linear-gradient(#eef3fb, #eef3fb) 17px 9px / 12px 2px no-repeat, #5a5a5a; }

.dd { display: inline-block; width: 0; height: 0; border: 3.500px solid transparent; border-top: 4px solid #444; border-bottom: 0; }
.dd.lt { border-top-color: #aaa; }

/* definition dialog */
.dlg { position: absolute; left: 49px; top: 39px; width: 1822px; height: 966px; display: flex; flex-direction: column; background: #fff; border: 1px solid #d6d6d6; border-bottom-width: 2px; box-shadow: 3px 3px 10px rgba(0,0,0,.3); }
.dlg-title { display: flex; align-items: center; justify-content: space-between; height: 35px; flex: none; padding: 10px 15px 0 13px; font-size: 16px; color: #444; border-bottom: 2px solid #e0e0e0; }
.dlg-ctrl { display: flex; gap: 21px; }
.dlg-ctrl svg { width: 14px; height: 14px; }
.dlg-bar { display: flex; align-items: center; height: 36px; flex: none; padding: 2px 0 0 2px; border-bottom: 2px solid #d0d0d0; }
.floor-select { display: flex; align-items: center; justify-content: space-between; width: 125px; height: 30px; padding: 0 6px 0 4px; border: 1px solid #ddd; border-radius: 4px; }
.sep { width: 1px; height: 30px; margin: 0 9px 0 3px; background: #d8d8d8; }
.tb { display: flex; align-items: center; gap: 6px; white-space: nowrap; color: #444; font-size: 15px; }
.tb svg { width: 20px; height: 20px; flex: none; }
.tb .dd { margin: 0 0 0 1px; }
.tb.off { color: #aaa; }
.dlg-bar .tb { margin-right: 12px; }
.dlg-bar .tb-last { margin-right: 7px; }
.dlg-bar .tb-g2 { margin-right: 11px; }

.dlg-body { display: flex; flex: 1; min-height: 0; background: #efefef; }
.band { height: 12px; flex: none; background: #d2d4d9; }
.phead { height: 28px; flex: none; padding-left: 11px; line-height: 26px; color: #8a8a8a; font-weight: 500; background: #eee; border-top: 1px solid #dcdcdc; border-bottom: 2px solid #d0d0d0; }
.col-nav { display: flex; flex-direction: column; width: 158px; flex: none; margin-right: 6px; }
.nav-list { display: flex; flex-direction: column; gap: 4px; flex: 1; padding-top: 4px; background: #fff; }
.row { display: flex; align-items: center; height: 26px; flex: none; padding-left: 4px; white-space: nowrap; }
.row .lock { width: 12px; height: 16px; margin-left: 1px; }
.sub { padding-left: 23px; }
.sub svg { width: 22px; height: 22px; margin-right: 16px; }
.sub.on { background: #c7dffa; }

.col-comp { display: flex; flex-direction: column; width: 358px; flex: none; margin-right: 6px; }
.ptools { display: flex; align-items: center; gap: 12px; height: 34px; flex: none; padding: 4px 0 0 5px; background: #fff; border-bottom: 1px solid #d8d8d8; }
.search { display: flex; align-items: center; justify-content: space-between; height: 24px; flex: none; margin: 1px 0; padding: 0 7px 0 3px; color: #aaa; background: #fff; border: 1px solid #dcdcdc; border-radius: 3px; }
.search svg { width: 14px; height: 14px; }
.comp-list { height: 388px; flex: none; background: #fff; border: 1px solid #d6d6d6; }
.tree-head { display: flex; align-items: center; height: 30px; padding-left: 17px; }
.arrow { display: inline-block; width: 0; height: 0; margin-right: 5px; border: 4px solid transparent; border-top: 5px solid #8a8a8a; border-bottom: 0; }
.item { height: 30px; padding: 3px 0 0 49px; }
.item span { display: inline-block; height: 26px; padding: 0 10px 0 4px; line-height: 26px; word-spacing: 5px; white-space: nowrap; }
.item:nth-child(2) span { width: 134px; }
.item:nth-child(5) span { width: 134px; }
.item span.on { background: #c7dffa; border-radius: 3px; }
.split { height: 5px; flex: none; background: #efefef; }
.prop-wrap { flex: 1; padding-top: 1px; background: #fff; border-right: 1px solid #e2e2e2; }
.prop { width: 356px; border-collapse: collapse; table-layout: fixed; }
.prop th, .prop td { height: 26px; padding: 0 4px; border: 1px solid #dcdcdc; font-weight: 400; white-space: nowrap; }
.prop th { background: #f1f1f1; text-align: center; }
.prop th:nth-child(1) { width: 27px; } .prop th:nth-child(2) { width: 126px; } .prop th:nth-child(3) { width: 150px; }
.prop .link { color: #2f6fe8; }
.prop .c { text-align: center; padding: 0; }
.cb { display: inline-block; width: 18px; height: 18px; vertical-align: middle; border: 1.500px solid #aaa; border-radius: 3px; }
.plus { display: inline-block; width: 16px; height: 16px; margin: 0 7px 0 -1px; text-align: center; font-size: 12px; line-height: 13px; vertical-align: 1px; border: 1px solid #aaa; border-radius: 3px; }

.col-main { display: flex; flex-direction: column; flex: 1; min-width: 0; }
.main-top { display: flex; flex: 1; min-height: 0; }
.col-type { display: flex; flex-direction: column; width: 221px; flex: none; margin-right: 7px; }
.type-head { height: 35px; flex: none; padding-top: 3px; line-height: 24px; background: #fff; color: #444; }
.type-tree { flex: 1; padding-top: 3px; background: #fff; border: 1px solid #d6d6d6; }
.t1, .t2 { display: flex; align-items: center; height: 26px; margin-bottom: 4px; white-space: nowrap; }
.t1 { padding-left: 28px; }
.t1.on, .t1.open { padding-left: 12px; }
.t1 .arrow { margin: 0 8px 0 0; }
.t1 span { display: flex; align-items: center; height: 26px; }
.t1.on span { flex: 1; margin-left: -4px; padding-left: 4px; background: #c7dffa; }
.t2 { padding-left: 53px; }
.col-dep { display: flex; flex-direction: column; flex: 1; min-width: 0; }
.tabs { display: flex; height: 28px; flex: none; background: #eee; border-top: 1px solid #dcdcdc; border-bottom: 2px solid #d0d0d0; }
.tab { display: flex; align-items: center; justify-content: center; width: 81px; color: #999; font-weight: 500; border-right: 1px solid #d8d8d8; }
.tab.on { width: 111px; color: #444; font-weight: 700; }
.dep-tools { gap: 18px; padding-left: 7px; }
.dep-gap { height: 10px; flex: none; background: #fff; border-bottom: 2px solid #e2e2e2; }
.dep-area { flex: 1; background: #fff; }
.grid { position: relative; display: grid; grid-template-columns: 126px 190px; grid-template-rows: 26px 26px; width: 316px; }
.gh { display: flex; align-items: center; justify-content: center; color: #fff; font-weight: 700; background: #7ab8f8; border-right: 1px solid #5c9fe6; }
.gc { display: flex; align-items: center; padding-left: 3px; border-bottom: 2px solid #888; }
.g2.sel { padding-left: 4px; background: #d2e7fd; border-right: 2px solid #888; }
.grip { position: absolute; left: 1px; bottom: -3px; width: 5px; height: 5px; background: #666; }
.dlg-foot { display: flex; align-items: center; justify-content: flex-end; height: 13px; flex: none; padding-right: 3px; background: #fafaf2; }
.dlg-foot svg { width: 10px; height: 10px; }
```
